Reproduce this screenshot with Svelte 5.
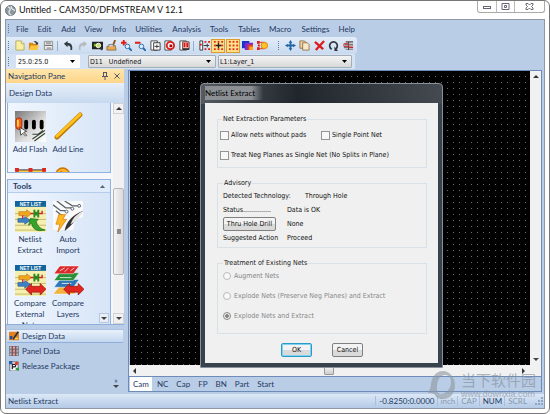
<script lang="ts">
  let step = $state('25.0:25.0')
  let aperture = $state('D11   Undefined')
  let layer = $state('L1:Layer_1')
  let treatment = $state('extract')
  let activeTab = $state('Cam')
  let activeGroup = $state('Design Data')

  const menus = ['File', 'Edit', 'Add', 'View', 'Info', 'Utilities', 'Analysis', 'Tools', 'Tables', 'Macro', 'Settings', 'Help']
  const tabs = ['Cam', 'NC', 'Cap', 'FP', 'BN', 'Part', 'Start']

  const dots = (color: string) =>
    [2, 6, 10].map((y) => [2, 6, 10].map((x) => `<rect x="${x - 1}" y="${y - 1}" width="2" height="2" fill="${color}"/>`).join('')).join('')

  const page = '<path d="M1 1h7v10h-7z" fill="#fff" stroke="#444"/>'

  // toolbar buttons, 12x12 artwork; null is a separator
  const tools = [
    { name: 'New', art: '<path d="M2 1h6l3 3v7H2z" fill="#f8f0a0" stroke="#b9a860"/><path d="M8 1v3h3" fill="#fff" stroke="#b9a860"/>' },
    { name: 'Open', art: '<path d="M1 3h4l1 1h4v7H1z" fill="#d98a14"/><path d="M3 6h9l-2 5H1z" fill="#ffc53c"/><path d="M6 2q3-2 4 1l1-1v3H8l1-1Q8 2 6 2z" fill="#333"/>' },
    { name: 'Save', art: '<path d="M1.500 1.500h9v9h-9z" fill="#eee" stroke="#8b8b8b"/><path d="M3 2h6v3H3zM4 8h5v3H4z" fill="#aaa"/><path d="M2 6h8" stroke="#666"/>' },
    null,
    { name: 'Undo', art: '<path d="M1 4l4-3v2q6 0 5 8H8q1-5-3-5v2z" fill="#333b44"/>' },
    { name: 'Redo', art: '<path d="M11 4L7 1v2q-6 0-5 8h2q-1-5 3-5v2z" fill="#b5bbc1"/>' },
    { name: 'Redraw', art: '<path d="M0 2h12v8H0z" fill="#222"/><path d="M2 4h4v3H2z" fill="#79b52a"/><circle cx="7" cy="6" r="2.500" fill="#c7e26a" stroke="#fff"/><path d="M9 8l2 3" stroke="#333" stroke-width="2"/>' },
    { name: 'Clear', art: '<path d="M1 7l9-1 1 5H1z" fill="#eba94b" stroke="#8d6d49"/><path d="M3 7V5h5v2" fill="#ddd" stroke="#777"/><path d="M8 5l2-5" stroke="#8a5424" stroke-width="2"/>' },
    { name: 'Zoom In', art: '<circle cx="7" cy="7" r="2.500" fill="#dbeeff" stroke="#2367ad"/><path d="M9 9l3 3" stroke="#2367ad" stroke-width="2"/><path d="M0 3h6M3 0v6" stroke="#e21b1b" stroke-width="2"/>' },
    { name: 'Zoom Out', art: '<circle cx="7" cy="7" r="2.500" fill="#dbeeff" stroke="#2367ad"/><path d="M9 9l3 3" stroke="#2367ad" stroke-width="2"/><path d="M0 3h6" stroke="#e21b1b" stroke-width="2"/>' },
    { name: 'Copy Layer', art: page + '<path d="M4 3h7v8H4z" fill="#fff" stroke="#333"/><path d="M5 7h5M7.500 5v4" stroke="#333"/>' },
    { name: 'Target', art: page + '<circle cx="7" cy="6" r="4" fill="#fff" stroke="#dd1c1c" stroke-width="2"/><path d="M6 5h3v3H6z" fill="#a00"/>' },
    { name: 'Compare', art: page + '<path d="M4 2h7v8H4z" fill="#f6d8d0" stroke="#633"/><path d="M6 3v5M9 3v5" stroke="#d11" stroke-width="2"/><path d="M4 10h7" stroke="#333" stroke-width="2"/>' },
    null,
    { name: 'Snap Left', art: '<path d="M1 1h3v10H1z" fill="#fff" stroke="#333"/><path d="M5 6h6M9 4v4" stroke="#333"/><path d="M6 1h2v2H6zM10 1h2v2h-2zM6 9h2v2H6zM10 9h2v2h-2zM1 4h2v2H1z" fill="#dd1c1c"/>' },
    { name: 'Grid Snap', art: dots('#e0301e') + '<path d="M3 6h6M6 3v6" stroke="#222" stroke-width="1.400"/>', on: true },
    { name: 'Grid', art: dots('#e0301e'), on: true },
    { name: 'Colors', art: '<path d="M0 1h8v8H0z" fill="#1834c8"/><path d="M3 3h9v8H3z" fill="#7b2ad0"/><path d="M6 5h6v6H6z" fill="#e23a2a"/><path d="M8 7h4v4H8z" fill="#ffa51f"/>' },
    { name: 'Highlight', art: '<path d="M0 1h3v3H0zM0 8h3v3H0z" fill="#dd1c1c"/><path d="M3 2.500h5M3 9.500h5" stroke="#dd1c1c"/><circle cx="8" cy="6" r="3.500" fill="#ffc324" stroke="#e07b11"/><path d="M1 6h2" stroke="#d11" stroke-width="2"/>' }
  ]

  const editTools = [
    { name: 'Move', art: '<path d="M6 0l2 3H7v2h2V4l3 2-3 2V7H7v2h1l-2 3-2-3h1V7H3v1L0 6l3-2v1h2V3H4z" fill="#2465a8"/>' },
    { name: 'Copy', art: '<path d="M1 1h5l2 2v6H1z" fill="#ead1ab" stroke="#94734a"/><path d="M4 3h5l2 2v6H4z" fill="#fbe8cb" stroke="#94734a"/>' },
    { name: 'Delete', art: '<path d="M1 2l9 8M11 1L2 11" stroke="#dc1c1c" stroke-width="2.400"/>' },
    { name: 'Rotate', art: '<path d="M4 10a4.200 4.200 0 1 1 4 0" fill="none" stroke="#2e353d" stroke-width="1.800"/><path d="M7 7v5h4z" fill="#2e353d"/>' },
    { name: 'Mirror', art: '<path d="M3 1h8v2H3zM2 4h9v2H2zM1 7h7v2H1zM3 10h8v1H3z" fill="#777"/><path d="M6 2v9" stroke="#444"/><path d="M1 4h5v3H1z" fill="none" stroke="#d2232a"/><path d="M7 8h4" stroke="#d2232a" stroke-width="2"/>' }
  ]

  const netlist = `<rect width="32" height="32" fill="#f5efb0"/><path d="M0 13h32M0 19h32M0 25h32M0 30h32" stroke="#c5b96e"/>
    <rect width="32" height="6" fill="#12649c"/><path d="M4 11h8v-2l5 4-5 4v-2H4z" fill="#f0a71f" stroke="#b86f10" stroke-width=".6"/>
    <path d="M16 13h12v-3M8 20v-5" fill="none" stroke="#d23" stroke-width="1.500"/><path d="M19 9h2v8h-2zM23 9h2v8h-2zM21 11h2v4h-2z" fill="#2a8b1e"/>
    <path d="M3 18h7v-2l6 4-6 4v-2H3z" fill="#3f7fc4" stroke="#235a94" stroke-width=".6"/>
    <text x="16" y="5" text-anchor="middle" font-family="Liberation Sans, sans-serif" font-weight="bold" font-size="5" fill="#fff">NET LIST</text>`
  const redArrow = '<path d="M11 25l6-6v3h9v-3l6 6-6 6v-3h-9v3z" fill="#e0261f" stroke="#97150f" stroke-width=".7"/>'

  const drawItems = [
    {
      label: 'Add Flash',
      art: `<defs><linearGradient id="fg" x2="1" y2="1"><stop stop-color="#777"/><stop offset=".6" stop-color="#ddd"/><stop offset="1" stop-color="#fff"/></linearGradient></defs>
        <rect width="32" height="32" fill="url(#fg)"/><rect x="1" y="7" width="6" height="12" rx="3" fill="#f4611d" stroke="#b5280c"/><path d="M3 9v7" stroke="#ffd24a" stroke-width="2"/>
        <rect x="9.500" y="9" width="4" height="10" rx="2"/><rect x="17.500" y="9" width="4" height="10" rx="2"/><rect x="25.500" y="9" width="4" height="10" rx="2"/>
        <path d="M5 17l1 8 2-2 3 3 1-1-3-3 3-1z" fill="#fff" stroke="#222" stroke-width=".8"/><path d="M18 29l13-9M20 31l11-8M18 24h6l5-4" fill="none" stroke="#343" stroke-width="1.200"/>`
    },
    {
      label: 'Add Line',
      art: '<path d="M4 27L28 4" stroke="#c17a05" stroke-width="5" stroke-linecap="round"/><path d="M4 26L28 3.500" stroke="#ffc21c" stroke-width="3" stroke-linecap="round"/>'
    },
    {
      label: '',
      art: '<path d="M2 3h28v26H2z" fill="#f9c84e" stroke="#333"/><path d="M0 1h4v4H0zM14 1h4v4h-4zM28 1h4v4h-4z" fill="#e0261f"/>'
    },
    {
      label: '',
      art: '<circle cx="10" cy="8" r="7" fill="#ffb52a" stroke="#c9740b" stroke-width="1.500"/><path d="M8 4l5 3-5 2z" fill="#e0261f"/>'
    }
  ]

  const toolItems = [
    { label: 'Netlist Extract', art: netlist + '<path d="M16 18l8 1-2 2q1 7 9 9-12 3-14-7l-3 2z" fill="#38a32a" stroke="#176b10" stroke-width=".7"/>' },
    {
      label: 'Auto Import',
      art: `<path d="M0 0h31v17q-9-1-10 13H0z" fill="#fafafa"/><path d="M0 4l8 6h5M4 0l9 7h6M12 0l8 5h6M3 10l6 5" fill="none" stroke="#59636b" stroke-width="1.300"/><g fill="#fff" stroke="#59636b"><circle cx="14" cy="11" r="1.500"/><circle cx="20" cy="8" r="1.500"/><circle cx="27" cy="5" r="1.500"/></g>
        <path d="M31 10Q14 17 12 31q10-8 19-21z" fill="#333"/><path d="M31 10q-10 5-13 14 9-4 13-14z" fill="#e5e5e5"/><path d="M6 14h7l-3 5h4L5 32l2-8H3z" fill="#ffb71f" stroke="#d47a0b" stroke-width=".7"/>`
    },
    { label: 'Compare External Nets', art: netlist + redArrow },
    {
      label: 'Compare Layers',
      art: `<g stroke="#fff" stroke-width=".5"><path d="M7 22h22l-7 8H0z" fill="#f3b13e"/><path d="M7 15h20l-6 8H1z" fill="#2e78b9"/><path d="M7 8h20l-6 8H1z" fill="#299138"/><path d="M7 1h20l-6 8H1z" fill="#dc2a2a"/></g>
        <path d="M7 6l5-3M12 7l4-4M18 6l4-3M7 13h12M9 19h10" stroke="#fff" stroke-width=".8"/>` + redArrow
    }
  ]

  const groups = [
    { name: 'Design Data', art: '<path d="M0 1h12v10H0z" fill="#e58022"/><path d="M1 6h3v4H1z" fill="#234d91"/><path d="M5 10l6-9" stroke="#27313c" stroke-width="2"/><path d="M7 8h4v2H7z" fill="#ffd350"/>' },
    { name: 'Panel Data', art: '<rect width="12" height="12" fill="#77818a"/><path d="M1 1h2v2H1zM5 1h2v2H5zM9 1h2v2H9zM1 5h2v2H1zM5 5h2v2H5zM9 5h2v2H9zM1 9h2v2H1zM5 9h2v2H5zM9 9h2v2H9z" fill="#d5b7b7"/><path d="M4 0v12M8 0v12" stroke="#a33"/>' },
    { name: 'Release Package', art: '<path d="M1 1h10v11H1z" fill="#fff" stroke="#556"/><path d="M0 0h4v4H0z" fill="#285f9c"/><path d="M4 10V4h3q2 2 0 3H4" fill="none" stroke="#223" stroke-width="1.500"/><circle cx="9" cy="3" r="2" fill="#dc3b22"/><path d="M8 8h4v3H8z" fill="#2c9c49"/>' }
  ]

  const treatments = [
    { value: 'augment', label: 'Augment Nets' },
    { value: 'preserve', label: 'Explode Nets (Preserve Neg Planes) and Extract' },
    { value: 'extract', label: 'Explode Nets and Extract' }
  ]
</script>

{#snippet icon(art: string, size: number)}
  <svg class="icon" width={size} height={size} viewBox="0 0 {size === 31 ? 32 : 12} {size === 31 ? 32 : 12}" aria-hidden="true">{@html art}</svg>
{/snippet}

{#snippet shortcut(item: { label: string; art: string })}
  <button class="shortcut">
    {@render icon(item.art, 31)}
    {#if item.label}<span>{item.label}</span>{/if}
  </button>
{/snippet}

<div class="window">
  <header class="titlebar">
    <svg class="logo" width="11" height="11" viewBox="0 0 12 12" aria-hidden="true">
      <circle cx="6" cy="6" r="5.500" fill="#8b979d" stroke="#66737a" />
      <path d="M3 2q4 1 2 4t2 5M7 1q-1 3 4 5" fill="none" stroke="#dfe7e9" stroke-width="1.500" />
    </svg>
    <h1>Untitled - CAM350/DFMSTREAM V 12.1</h1>
    <div class="controls">
      <button aria-label="Minimize"><svg width="9" height="7"><rect x=".5" y="3.500" width="7" height="2" fill="#fff" stroke="#667" /></svg></button>
      <button aria-label="Maximize"><svg width="9" height="7"><path d="M1 .5h7v6H1zM3.500 2.500h2v2h-2z" fill="#fff" stroke="#667" /></svg></button>
      <button class="close" aria-label="Close"><svg width="9" height="7"><path d="M1 .5h2l1.500 1.500L6 .5h2v1.500L6.500 3.500 8 5v1.500H6L4.500 5 3 6.500H1V5l1.500-1.500L1 2z" fill="#fff" stroke="#667" /></svg></button>
    </div>
  </header>

  <div class="frame">
    <nav class="menubar">
      <i class="grip"></i>
      {#each menus as menu}
        <button>{menu}</button>
      {/each}
    </nav>

    <div class="toolbar">
      <i class="grip"></i>
      {#each tools as tool}
        {#if tool}
          <button class:on={tool.on} aria-label={tool.name}>{@render icon(tool.art, 11)}</button>
        {:else}
          <i class="sep"></i>
        {/if}
      {/each}
      <i class="grip second"></i>
      {#each editTools as tool}
        <button aria-label={tool.name}>{@render icon(tool.art, 11)}</button>
      {/each}
    </div>

    <div class="combos">
      <i class="grip"></i>
      <select class="step" aria-label="Grid step" bind:value={step}><option>25.0:25.0</option></select>
      <select class="aperture" aria-label="Aperture" bind:value={aperture}><option value="D11   Undefined">D11&nbsp;&nbsp; Undefined</option></select>
      <select class="layer" aria-label="Layer" bind:value={layer}><option>L1:Layer_1</option></select>
    </div>

    <div class="main">
      <aside class="pane">
        <div class="pane-title">
          <h2>Navigation Pane</h2>
          <button aria-label="Pin"><svg width="6" height="8"><path d="M1.500 0v4M4.500 0v4M1 .5h4M0 4.500h6M3 5v3" stroke="#556" fill="none" /></svg></button>
          <button aria-label="Close pane"><svg width="6" height="6"><path d="M.5.5l5 5M5.500.5l-5 5" stroke="#556" /></svg></button>
        </div>
        <h3 class="group-title">Design Data</h3>
        <div class="browser">
          <div class="panels">
            <section class="panel draw">
              <div class="shortcuts">
                {#each drawItems as item}{@render shortcut(item)}{/each}
              </div>
            </section>
            <section class="panel tools">
              <h4>Tools <svg width="5" height="3"><path d="M0 3l2.500-3L5 3z" fill="#567" /></svg></h4>
              <div class="shortcuts">
                {#each toolItems as item}{@render shortcut(item)}{/each}
              </div>
              <button class="more" aria-label="Next tools"><i class="down"></i></button>
            </section>
          </div>
          <div class="scroll">
            <button aria-label="Scroll up"><i class="up"></i></button>
            <div class="track"><div class="thumb"></div></div>
            <button aria-label="Scroll down"><i class="down"></i></button>
          </div>
        </div>
        <div class="groups">
          {#each groups as group}
            <button class:active={activeGroup === group.name} onclick={() => (activeGroup = group.name)}>
              {@render icon(group.art, 10)}
              {group.name}
            </button>
          {/each}
          <span class="chevrons">»<i class="down"></i></span>
        </div>
      </aside>

      <main class="workspace">
        <div class="canvas-row">
          <div class="canvas"></div>
          <div class="scroll plain">
            <button aria-label="Scroll up"><i class="up"></i></button>
            <button aria-label="Scroll down"><i class="down"></i></button>
          </div>
        </div>
        <div class="hscroll">
          <button aria-label="Scroll left"><i class="left"></i></button>
          <div class="hthumb"></div>
          <button aria-label="Scroll right"><i class="right"></i></button>
        </div>
        <div class="tabs">
          {#each tabs as tab}
            <button class:active={activeTab === tab} onclick={() => (activeTab = tab)}>{tab}</button>
          {/each}
        </div>

        <div class="dialog" role="dialog" aria-labelledby="dialog-title">
          <h2 id="dialog-title"><span>Netlist Extract</span></h2>
          <form class="body" onsubmit={(e) => e.preventDefault()}>
            <fieldset class="params">
              <legend>Net Extraction Parameters</legend>
              <div class="pair">
                <label><input type="checkbox" />Allow nets without pads</label>
                <label><input type="checkbox" />Single Point Net</label>
              </div>
              <label><input type="checkbox" />Treat Neg Planes as Single Net (No Splits in Plane)</label>
            </fieldset>

            <fieldset class="advisory">
              <legend>Advisory</legend>
              <p><span class="wide">Detected Technology:</span>Through Hole</p>
              <p><span>Status..............</span>Data is OK</p>
              <p><span><button type="button" class="push drill">Thru Hole Drill</button></span>None</p>
              <p><span>Suggested Action</span>Proceed</p>
            </fieldset>

            <fieldset class="existing">
              <legend>Treatment of Existing Nets</legend>
              {#each treatments as t}
                <label><input type="radio" name="treatment" value={t.value} bind:group={treatment} disabled />{t.label}</label>
              {/each}
            </fieldset>

            <div class="actions">
              <button class="push ok">OK</button>
              <button type="button" class="push">Cancel</button>
            </div>
          </form>
        </div>
      </main>
    </div>

    <footer class="status">
      <span class="hint">Netlist Extract</span>
      <span class="coords">-0.8250:0.0000</span>
      <span class="off">inch</span>
      <span class="off">CAP</span>
      <span>NUM</span>
      <span class="off">SCRL</span>
      <svg width="8" height="8"><path d="M6 0h2v2H6zM3 3h2v2H3zM6 3h2v2H6zM0 6h2v2H0zM3 6h2v2H3zM6 6h2v2H6z" fill="#8ea6c6" /></svg>
    </footer>
  </div>

  <div class="watermark">
    <svg width="28" height="28" viewBox="0 0 28 28" aria-hidden="true">
      <path d="M15 0C7 0 3 8 3 14c-1 4-2 6-3 8 3 0 5 0 7 2 2 4 5 4 8 4 8 0 12-7 12-14S22 0 15 0zm2 4c4 0 6 3 6 7 0 7-5 12-10 12-4 0-4-4-4-7 0-7 3-12 8-12z" fill="#8e97a1" fill-rule="evenodd" />
    </svg>
    <div>
      <strong>当下软件园</strong>
      <span>www.downxia.com</span>
    </div>
  </div>
</div>

<style>
  :global(body) {
    margin: 0;
    background: #fff;
  }

  .window {
    position: relative;
    box-sizing: border-box;
    display: flex;
    flex-direction: column;
    height: 100vh;
    padding: 0 4px 4px;
    border: 1px solid #777;
    border-radius: 6px;
    background: #fff;
    overflow: hidden;
    font: 8px/10px Lato, 'Open Sans', sans-serif;
    color: #1f3a63;
  }

  button {
    padding: 0;
    border: 0;
    background: none;
    font: inherit;
    color: inherit;
  }

  h1, h2, h3, h4, p {
    margin: 0;
    font-size: inherit;
    font-weight: normal;
  }

  svg {
    flex: none;
    display: block;
  }

  .titlebar {
    display: flex;
    flex: none;
    align-items: center;
    gap: 3px;
    height: 18px;
    color: #111;
  }

  .titlebar h1 {
    flex: 1;
    font-size: 9px;
  }

  .controls {
    display: flex;
    align-self: flex-start;
    border: 1px solid #aaa;
    border-top: 0;
    border-radius: 0 0 3px 3px;
  }

  .controls button {
    display: flex;
    align-items: center;
    justify-content: center;
    width: 18px;
    height: 11px;
  }

  .controls button + button {
    border-left: 1px solid #bbb;
  }

  .controls .close {
    width: 30px;
  }

  .frame {
    display: flex;
    flex: 1;
    flex-direction: column;
    min-height: 0;
    border: 1px solid #8e98a5;
    background: #bacde6;
  }

  .grip {
    flex: none;
    width: 1px;
    height: 9px;
    margin: 0 6px 0 2px;
    border-left: 1px dotted #5f7ba3;
  }

  .menubar {
    display: flex;
    flex: none;
    align-items: center;
    height: 17px;
  }

  .menubar button {
    margin-right: 10px;
  }

  .menubar button:nth-child(even) {
    margin-right: 9px;
  }

  .toolbar {
    display: flex;
    align-items: center;
    align-self: flex-start;
    height: 17px;
    padding-right: 2px;
    border-radius: 0 3px 3px 0;
    background: linear-gradient(#e3edf8, #c9daef);
  }

  .toolbar .grip {
    margin-right: 2px;
  }

  .toolbar .grip.second {
    margin: 0 3px 0 9px;
  }

  .toolbar button {
    box-sizing: border-box;
    display: flex;
    align-items: center;
    justify-content: center;
    width: 14px;
    height: 14px;
    margin-right: 1px;
  }

  .toolbar button:nth-child(even) {
    margin-right: 0;
  }

  .toolbar button.on {
    border: 1px solid #dd9b2c;
    background: #ffe08a;
  }

  .sep {
    width: 1px;
    height: 10px;
    margin: 0 3px 0 2px;
    background: #94aed0;
  }

  .combos {
    display: flex;
    flex: none;
    align-items: center;
    align-self: flex-start;
    height: 15px;
    padding-right: 3px;
    background: #d5e2f3;
  }

  select {
    box-sizing: border-box;
    height: 13px;
    padding: 0 0 0 1px;
    border: 1px solid #a3adb8;
    border-radius: 1px;
    appearance: none;
    background: url("data:image/svg+xml,%3Csvg xmlns='http://www.w3.org/2000/svg' width='5' height='3'%3E%3Cpath d='M0 0h5L2.500 3z'/%3E%3C/svg%3E") no-repeat right 4px center, linear-gradient(#f4f4f4, #d8d8d8);
    font: 7px/10px 'DejaVu Sans Condensed', 'Liberation Sans', sans-serif;
    color: #111;
  }

  .step {
    width: 64px;
    margin-right: 8px;
    border-color: #fff;
    background-color: #fff;
    background-image: url("data:image/svg+xml,%3Csvg xmlns='http://www.w3.org/2000/svg' width='5' height='3'%3E%3Cpath d='M0 0h5L2.500 3z'/%3E%3C/svg%3E");
  }

  .aperture {
    width: 128px;
    margin-right: 2px;
  }

  .layer {
    width: 134px;
  }

  .main {
    display: flex;
    flex: 1;
    min-height: 0;
    gap: 4px;
  }

  .pane {
    display: flex;
    flex: none;
    flex-direction: column;
    width: 118px;
  }

  .pane-title {
    display: flex;
    align-items: center;
    gap: 6px;
    height: 14px;
    padding: 0 4px 0 2px;
    background: linear-gradient(#ffe6ac, #fdd588);
  }

  .pane-title h2 {
    flex: 1;
  }

  .group-title {
    flex: none;
    height: 20px;
    padding-left: 3px;
    background: linear-gradient(#e6effa, #c7d9ef);
    line-height: 20px;
  }

  .browser {
    display: flex;
    flex: 1;
    min-height: 0;
    gap: 2px;
    background: #f4f8fd;
  }

  .panels {
    display: flex;
    flex: 1;
    flex-direction: column;
    gap: 6px;
    min-width: 0;
    padding-left: 1px;
    overflow: hidden;
  }

  .panel {
    position: relative;
    border: 1px solid #90b2df;
    background: linear-gradient(90deg, #f0f6fe, #d7e5f7);
    overflow: hidden;
  }

  .draw {
    flex: none;
    height: 69px;
    border-top: 0;
  }

  .tools {
    flex: 1;
    border-bottom: 0;
  }

  .panel h4 {
    display: flex;
    align-items: center;
    justify-content: space-between;
    height: 12px;
    padding: 0 5px;
    border-bottom: 1px solid #b5cdec;
    background: #dfebfa;
    font-weight: bold;
  }

  .shortcuts {
    display: grid;
    grid-template-columns: 38px 38px;
    gap: 8px 0;
    padding: 8px 3px;
  }

  .shortcut {
    display: flex;
    flex-direction: column;
    align-items: center;
    gap: 2px;
    line-height: 11px;
  }

  .draw .shortcut {
    height: 48px;
    white-space: nowrap;
  }

  .tools .shortcut {
    height: 56px;
  }

  .more {
    position: absolute;
    right: 1px;
    bottom: 1px;
    display: flex;
    align-items: center;
    justify-content: center;
    width: 10px;
    height: 10px;
    border: 1px solid #b7c7dd;
    background: #e7eef8;
  }

  .up, .down, .left, .right {
    display: block;
    width: 0;
    height: 0;
    border: 3px solid transparent;
  }

  .up {
    border-top: 0;
    border-bottom-color: #333;
  }

  .down {
    border-bottom: 0;
    border-top-color: #444;
  }

  .left {
    border-left: 0;
    border-right-color: #333;
  }

  .right {
    border-right: 0;
    border-left-color: #333;
  }

  .scroll {
    display: flex;
    flex: none;
    flex-direction: column;
    justify-content: space-between;
    width: 11px;
    background: #f1f1f1;
  }

  .scroll button {
    display: flex;
    align-items: center;
    justify-content: center;
    height: 11px;
    border: 1px solid #d2d2d2;
  }

  .scroll.plain button {
    border: 0;
  }

  .track {
    display: flex;
    flex: 1;
    flex-direction: column;
    padding: 74px 0 38px;
  }

  .thumb {
    flex: 1;
    border: 1px solid #b5b5b5;
    border-radius: 2px;
    background: linear-gradient(#888 0 0) center / 4px 5px no-repeat, linear-gradient(90deg, #f5f5f5, #d9d9d9);
  }

  .groups {
    display: flex;
    flex: none;
    flex-direction: column;
    gap: 3px;
    padding: 5px 1px 1px;
    border-top: 1px solid #8faedb;
  }

  .groups button {
    display: flex;
    align-items: center;
    gap: 3px;
    height: 12px;
    padding-left: 2px;
  }

  .groups button.active {
    background: linear-gradient(#e9f1fb, #c4d7ef);
    box-shadow: 0 1px #8faedb, 0 -1px #a9c2e4;
  }

  .chevrons {
    display: flex;
    flex-direction: column;
    align-items: center;
    align-self: flex-end;
    height: 18px;
    padding-right: 4px;
  }

  .workspace {
    position: relative;
    display: flex;
    flex: 1;
    flex-direction: column;
    min-width: 0;
    margin: 1px 2px 2px 0;
    border: 1px solid #6d8db8;
  }

  .canvas-row {
    display: flex;
    flex: 1;
    min-height: 0;
  }

  .canvas {
    flex: 1;
    margin-left: 1px;
    background: linear-gradient(90deg, #000 5px, transparent 5px) 0 0 / 6px 6px, linear-gradient(#000 5px, #6b6b6b 5px) 0 0 / 6px 6px;
  }

  .hscroll {
    display: flex;
    flex: none;
    align-items: center;
    justify-content: space-between;
    height: 11px;
    padding: 0 16px 0 4px;
    border-bottom: 1px solid #6d8db8;
    background: #f1f1f1;
  }

  .hthumb {
    box-sizing: border-box;
    width: 10px;
    height: 9px;
    border: 1px solid #999;
    border-radius: 1px;
    background: linear-gradient(#f5f5f5, #ccc);
  }

  .tabs {
    display: flex;
    flex: none;
    height: 14px;
    padding-left: 1px;
    gap: 2px;
  }

  .tabs button {
    padding: 0 3px;
  }

  .tabs .active {
    background: #fff;
  }

  .status {
    display: flex;
    flex: none;
    align-items: center;
    gap: 2px;
    height: 14px;
    padding: 0 1px 0 2px;
    background: linear-gradient(#dce8f6, #b4cae6);
  }

  .status span + span {
    padding-left: 3px;
    border-left: 1px solid #a9bfdd;
  }

  .status .hint {
    flex: 1;
  }

  .status .off {
    color: #8798b0;
  }

  .status svg {
    margin-left: 6px;
  }

  .dialog {
    position: absolute;
    top: 12px;
    left: 71px;
    box-sizing: border-box;
    width: 243px;
    padding: 0 4px 4px;
    border: 1px solid #8a9099;
    border-radius: 4px 4px 1px 1px;
    background: linear-gradient(90deg, #555b61, #20262c 40%, #444a50) top / 100% 20px no-repeat, #38424d;
  }

  .dialog h2 {
    height: 19px;
    color: #000;
    font-size: 8px;
    line-height: 18px;
  }

  .dialog h2 span {
    padding: 2px 8px 2px 0;
    background: linear-gradient(90deg, #8c9094 80%, transparent);
  }

  .body {
    padding: 11px 11px 6px 12px;
    background: #f0f0f0;
    color: #111;
    font: 7px/10px 'DejaVu Sans Condensed', 'Liberation Sans', sans-serif;
  }

  fieldset {
    box-sizing: border-box;
    min-width: 0;
    margin: 0 0 10px;
    padding: 1px 2px 0;
    border: 1px solid #d8e0e8;
    white-space: nowrap;
  }

  legend {
    padding: 0 1px;
    margin-left: 2px;
  }

  .params {
    height: 54px;
  }

  .params label {
    display: flex;
    align-items: center;
    height: 20px;
  }

  .pair {
    display: grid;
    grid-template-columns: 101px 1fr;
  }

  .advisory {
    height: 70px;
    padding: 1px 5px 0;
  }

  .advisory legend,
  .existing legend {
    margin-left: 0;
  }

  .advisory p {
    display: flex;
    align-items: center;
    height: 14px;
  }

  .advisory p span {
    flex: none;
    width: 64px;
  }

  .advisory p .wide {
    width: 82px;
  }

  .existing {
    height: 76px;
    margin-bottom: 9px;
    padding: 0 5px;
    color: #888;
  }

  .existing legend {
    color: #222;
  }

  .existing label {
    display: flex;
    align-items: center;
    height: 16px;
    margin-bottom: 4px;
  }

  input {
    flex: none;
    box-sizing: border-box;
    width: 9px;
    height: 9px;
    margin: 0 2px 0 0;
    border: 1px solid #959595;
    appearance: none;
    background: #f8f8f8;
  }

  input[type='radio'] {
    width: 8px;
    height: 8px;
    margin-right: 3px;
    border-color: #bbb;
    border-radius: 50%;
  }

  input:checked {
    border-color: #888;
    background: radial-gradient(#888 0 2px, #eee 2px);
  }

  .push {
    box-sizing: border-box;
    width: 31px;
    height: 14px;
    border: 1px solid #808080;
    border-radius: 2px;
    background: linear-gradient(#f3f3f3 50%, #dadada 50%);
    color: #111;
  }

  .drill {
    width: 53px;
  }

  .ok {
    border-color: #2a9cc8;
    box-shadow: inset 0 0 0 1px #7fd3f0;
  }

  .actions {
    display: flex;
    justify-content: center;
    gap: 20px;
  }

  .watermark {
    position: absolute;
    right: 13px;
    bottom: 14px;
    display: flex;
    gap: 5px;
    opacity: 0.6;
    color: #838c98;
  }

  .watermark strong, .watermark span {
    display: block;
  }

  .watermark strong {
    font: 15px/18px 'Noto Sans CJK SC', sans-serif;
  }

  .watermark span {
    font: 9px/10px 'Liberation Sans', sans-serif;
  }
</style>
